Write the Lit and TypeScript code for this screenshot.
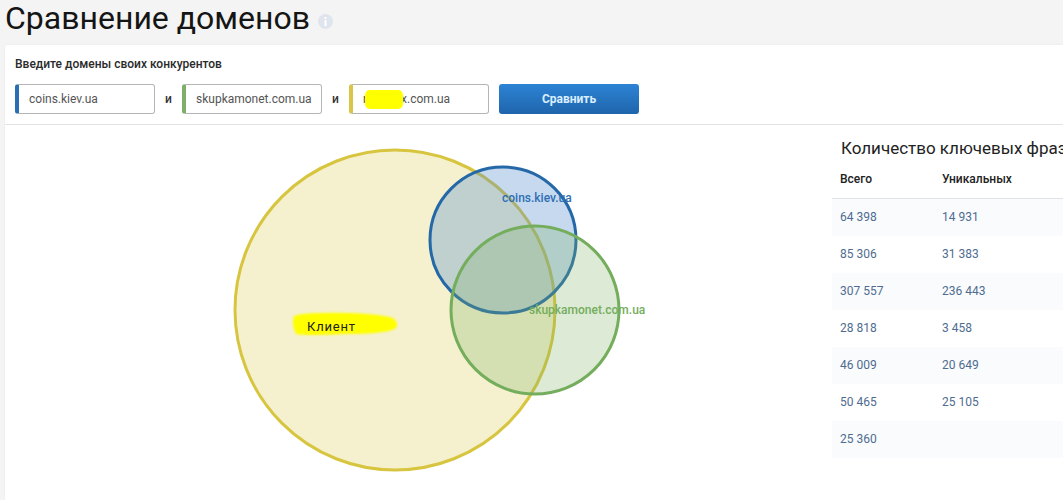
import { LitElement, html, css, svg } from "lit";
import { customElement } from "lit/decorators.js";

const rows: [string, string][] = [
  ["64 398", "14 931"],
  ["85 306", "31 383"],
  ["307 557", "236 443"],
  ["28 818", "3 458"],
  ["46 009", "20 649"],
  ["50 465", "25 105"],
  ["25 360", ""],
];

@customElement("app-root")
export class AppRoot extends LitElement {
  static styles = css`
    :host { display: block; width: 1063px; height: 500px; overflow: hidden; background: #f4f4f4; font-family: Roboto, "Liberation Sans", sans-serif; color: #1a1a1a; }
    * { box-sizing: border-box; }
    .head { height: 45px; display: flex; align-items: flex-start; gap: 8px; padding-left: 5px; }
    h1 { margin: 0; font-size: 32px; font-weight: 400; line-height: 36px; color: #151515; }
    .info { width: 15px; height: 15px; margin-top: 14px; }
    .card { margin-left: 5px; height: 455px; background: #fff; border-radius: 3px 0 0 0; box-shadow: 0 0 3px rgba(0,0,0,.05); }
    .form { height: 80px; border-bottom: 1px solid #e3e3e3; padding: 12px 0 0 10px; }
    .label { font-size: 12px; font-weight: 500; line-height: 14px; height: 27px; color: #2a2a2a; }
    .inputs { display: flex; align-items: center; }
    .field { width: 140px; height: 30px; border: 1px solid #b5b5b5; border-left: 4px solid; border-radius: 3px; font-size: 12px; line-height: 28px; padding-left: 10px; color: #555; white-space: nowrap; position: relative; overflow: hidden; background: #fff; }
    .f1 { border-left-color: #2a6fb3; }
    .f2 { border-left-color: #7cb066; }
    .f3 { border-left-color: #d9c648; }
    .and { width: 27px; text-align: center; font-size: 12px; font-weight: 500; color: #333; }
    .gap { display: inline-block; width: 34px; }
    .mark { position: absolute; left: 12px; top: 5px; width: 38px; height: 19px; background: #ffff00; border-radius: 5px; filter: blur(.6px); }
    .btn { margin-left: 10px; width: 140px; height: 30px; border: 0; border-radius: 3px; background: linear-gradient(#2c83d4, #1f65ac); color: #dbeeff; font: 700 12px Roboto, "Liberation Sans", sans-serif; }
    .body { display: flex; height: 375px; }
    .chart { width: 827px; flex: none; }
    .chart svg { display: block; }
    .blur { filter: blur(1px); }
    .side { flex: 1; min-width: 0; overflow: hidden; }
    h2 { margin: 0; padding: 13px 0 0 9px; height: 35px; font-size: 17px; font-weight: 400; line-height: 21px; white-space: nowrap; color: #222; }
    .th { height: 39px; display: flex; font-size: 12px; font-weight: 500; line-height: 38px; padding-left: 8px; border-bottom: 1px solid #dfe3e6; color: #222; }
    .row { height: 37px; display: flex; font-size: 12px; line-height: 37px; padding-left: 8px; color: #4f6c90; }
    .row:nth-of-type(even) { background: #f9fbfd; }
    .c1 { width: 102px; }
  `;

  private venn() {
    return svg`
      <circle cx="390" cy="185" r="160" fill="#e6d97e" fill-opacity=".38" stroke="#d8c53f" stroke-width="3"/>
      <circle cx="498" cy="115" r="73" fill="#5b92cf" fill-opacity=".35" stroke="#2468a8" stroke-width="3"/>
      <circle cx="530" cy="185" r="84" fill="#7cb066" fill-opacity=".27" stroke="#74ad5c" stroke-width="3"/>
      <path class="blur" d="M289 191 Q300 187 345 188 Q375 189 388 193 Q394 198 391 203 Q382 209 340 209 Q300 211 291 209 Q286 200 289 191Z" fill="#ffff00"/>
      <text x="302" y="206" font-size="13" letter-spacing=".8" fill="#222">Клиент</text>
      <text x="497" y="77" font-size="12" font-weight="500" fill="#2f6fb5">coins.kiev.ua</text>
      <text x="524" y="189" font-size="12" font-weight="500" fill="#74ad5c">skupkamonet.com.ua</text>
    `;
  }

  render() {
    return html`
      <div class="head">
        <h1>Сравнение доменов</h1>
        <svg class="info" viewBox="0 0 15 15" aria-hidden="true">
          <circle cx="7.5" cy="7.5" r="7.5" fill="#dfe5ee"/>
          <rect x="6.5" y="3" width="2" height="2" fill="#fff"/>
          <rect x="6.5" y="6" width="2" height="6" fill="#fff"/>
        </svg>
      </div>
      <div class="card">
        <div class="form">
          <div class="label">Введите домены своих конкурентов</div>
          <div class="inputs">
            <div class="field f1">coins.kiev.ua</div>
            <span class="and">и</span>
            <div class="field f2">skupkamonet.com.ua</div>
            <span class="and">и</span>
            <div class="field f3">r<span class="gap"></span>x.com.ua<span class="mark"></span></div>
            <button class="btn">Сравнить</button>
          </div>
        </div>
        <div class="body">
          <div class="chart">
            <svg width="827" height="375" viewBox="0 0 827 375">${this.venn()}</svg>
          </div>
          <div class="side">
            <h2>Количество ключевых фраз</h2>
            <div class="th"><span class="c1">Всего</span><span>Уникальных</span></div>
            ${rows.map(([a, b]) => html`<div class="row"><span class="c1">${a}</span><span>${b}</span></div>`)}
          </div>
        </div>
      </div>
    `;
  }
}
